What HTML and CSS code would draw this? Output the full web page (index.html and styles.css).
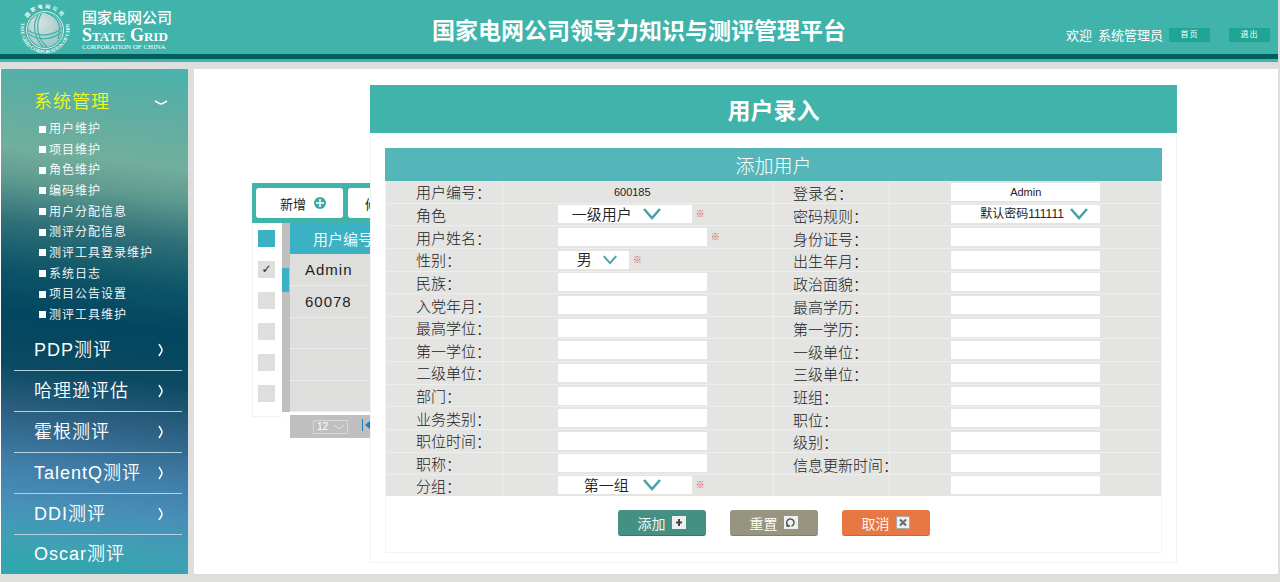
FILE: index.html
```
<!DOCTYPE html>
<html lang="zh-CN">
<head>
    <meta charset="UTF-8">
    <meta name="viewport" content="width=device-width, initial-scale=1.0">
    <title>国家电网公司领导力知识与测评管理平台</title>
    <link rel="stylesheet" href="styles.css">
</head>
<body>
    <header class="header">
        <div class="logo">
            <svg class="logo-mark" viewBox="0 0 50 50" width="50" height="50" aria-hidden="true">
                <defs>
                    <radialGradient id="ball" cx="35%" cy="30%" r="80%">
                        <stop offset="0" stop-color="#d5e2e2"/>
                        <stop offset="1" stop-color="#9cc4c4"/>
                    </radialGradient>
                    <path id="arcTop" d="M6 16 A20.500 20.500 0 0 1 44 16"/>
                    <path id="arcBottom" d="M1.500 17 A24.500 24.500 0 1 0 48.500 17"/>
                </defs>
                <circle cx="25" cy="25" r="18.500" fill="none" stroke="#d8efed" stroke-width="1"/>
                <circle cx="25" cy="25" r="17" fill="url(#ball)"/>
                <g fill="none" stroke="#40b3aa" stroke-width="1.300">
                    <path d="M18 10 C12 20 14 32 23 42"/>
                    <path d="M21 9 C15 20 17 33 27 42"/>
                    <path d="M8 25 C17 32 32 32 42 23"/>
                    <path d="M9 29 C18 36 33 35 41 27"/>
                    <path d="M26 8 C38 11 42 20 38 34"/>
                </g>
                <g fill="#f2fbfa">
                    <text class="logo-ring"><textPath href="#arcTop" startOffset="50%">国家电网公司</textPath></text>
                    <text class="logo-ring logo-ring-en"><textPath href="#arcBottom" startOffset="50%">STATE GRID CORPORATION OF CHINA</textPath></text>
                </g>
            </svg>
            <div class="logo-text">
                <span class="logo-cn">国家电网公司</span>
                <span class="logo-en">State Grid</span>
                <span class="logo-sub">CORPORATION OF CHINA</span>
            </div>
        </div>
        <h1>国家电网公司领导力知识与测评管理平台</h1>
        <div class="user">
            <span>欢迎</span>
            <span>系统管理员</span>
            <a href="#">首页</a>
            <a href="#" class="exit">退出</a>
        </div>
    </header>

    <div class="layout">
        <nav class="sidebar">
            <a href="#" class="menu-open">系统管理
                <svg width="14" height="6" viewBox="0 0 14 6" fill="none" stroke="#fff" stroke-width="1.500"><path d="M1 1 C3 2 5 4 7 4 S11 2 13 1"/></svg>
            </a>
            <ul class="submenu">
                <li><a href="#">用户维护</a></li>
                <li><a href="#">项目维护</a></li>
                <li><a href="#">角色维护</a></li>
                <li><a href="#">编码维护</a></li>
                <li><a href="#">用户分配信息</a></li>
                <li><a href="#">测评分配信息</a></li>
                <li><a href="#">测评工具登录维护</a></li>
                <li><a href="#">系统日志</a></li>
                <li><a href="#">项目公告设置</a></li>
                <li><a href="#">测评工具维护</a></li>
            </ul>
            <ul class="menu">
                <li><a href="#">PDP测评<svg width="6" height="14" viewBox="0 0 6 14"><path d="M1 1 C2 3 4 5 4 7 S2 11 1 13"/></svg></a></li>
                <li><a href="#">哈理逊评估<svg width="6" height="14" viewBox="0 0 6 14"><path d="M1 1 C2 3 4 5 4 7 S2 11 1 13"/></svg></a></li>
                <li><a href="#">霍根测评<svg width="6" height="14" viewBox="0 0 6 14"><path d="M1 1 C2 3 4 5 4 7 S2 11 1 13"/></svg></a></li>
                <li><a href="#">TalentQ测评<svg width="6" height="14" viewBox="0 0 6 14"><path d="M1 1 C2 3 4 5 4 7 S2 11 1 13"/></svg></a></li>
                <li><a href="#">DDI测评<svg width="6" height="14" viewBox="0 0 6 14"><path d="M1 1 C2 3 4 5 4 7 S2 11 1 13"/></svg></a></li>
                <li><a href="#">Oscar测评</a></li>
            </ul>
        </nav>

        <main class="main">
            <!-- 用户列表 -->
            <section class="list">
                <div class="toolbar">
                    <button type="button" class="tool">新增
                        <svg width="12" height="12" viewBox="0 0 12 12"><circle cx="6" cy="6" r="6" fill="#40a9a2"/><path d="M6 2v8M2 6h8" stroke="#fff" stroke-width="1.500"/></svg>
                    </button>
                    <button type="button" class="tool edit">修改</button>
                </div>
                <div class="list-body">
                    <div class="checks">
                        <input type="checkbox" class="all" aria-label="全选">
                        <input type="checkbox" aria-label="Admin" checked>
                        <input type="checkbox" aria-label="60078">
                        <input type="checkbox" aria-label="第三行">
                        <input type="checkbox" aria-label="第四行">
                        <input type="checkbox" aria-label="第五行">
                    </div>
                    <div class="scroll"><div class="thumb"></div></div>
                    <div class="records">
                        <table>
                            <thead><tr><th>用户编号</th></tr></thead>
                            <tbody>
                                <tr><td>Admin</td></tr>
                                <tr><td>60078</td></tr>
                                <tr><td></td></tr>
                                <tr><td></td></tr>
                                <tr><td></td></tr>
                            </tbody>
                        </table>
                        <div class="pager">
                            <span class="pick size">
                                <select aria-label="每页条数"><option>12</option></select>
                                <svg width="12" height="6" viewBox="0 0 12 6"><path d="M1 1l5 4 5-4"/></svg>
                            </span>
                            <button type="button" class="first" aria-label="首页">
                                <svg width="12" height="12" viewBox="0 0 12 12" fill="#1c7fc0"><path d="M0 0h1v12H0zM9 1v10L3 6z"/></svg>
                            </button>
                        </div>
                    </div>
                </div>
            </section>

            <!-- 用户录入弹窗 -->
            <section class="dialog">
                <h2>用户录入</h2>
                <form class="box">
                    <h3>添加用户</h3>
                    <table class="fields">
                        <tr>
                            <th>用户编号：</th>
                            <td><output class="code">600185</output></td>
                            <th><label for="login">登录名：</label></th>
                            <td><input id="login" type="text" value="Admin"></td>
                        </tr>
                        <tr>
                            <th><label for="role">角色</label></th>
                            <td><div class="cell"><span class="pick role"><select id="role"><option>一级用户</option></select><svg width="18" height="12" viewBox="0 0 18 12"><path d="M1 1l8 9 8-9"/></svg></span><i>※</i></div></td>
                            <th><label for="rule">密码规则：</label></th>
                            <td><div class="cell"><span class="pick rule"><select id="rule"><option>默认密码111111</option></select><svg width="18" height="12" viewBox="0 0 18 12"><path d="M1 1l8 9 8-9"/></svg></span></div></td>
                        </tr>
                        <tr>
                            <th><label for="name">用户姓名：</label></th>
                            <td><div class="cell"><input id="name" type="text"><i>※</i></div></td>
                            <th><label for="idcard">身份证号：</label></th>
                            <td><input id="idcard" type="text"></td>
                        </tr>
                        <tr>
                            <th><label for="sex">性别：</label></th>
                            <td><div class="cell"><span class="pick sex"><select id="sex"><option>男</option></select><svg width="14" height="10" viewBox="0 0 18 12"><path d="M1 1l8 9 8-9"/></svg></span><i>※</i></div></td>
                            <th><label for="birth">出生年月：</label></th>
                            <td><input id="birth" type="text"></td>
                        </tr>
                        <tr>
                            <th><label for="nation">民族：</label></th>
                            <td><input id="nation" type="text"></td>
                            <th><label for="politics">政治面貌：</label></th>
                            <td><input id="politics" type="text"></td>
                        </tr>
                        <tr>
                            <th><label for="party">入党年月：</label></th>
                            <td><input id="party" type="text"></td>
                            <th><label for="topedu">最高学历：</label></th>
                            <td><input id="topedu" type="text"></td>
                        </tr>
                        <tr>
                            <th><label for="topdeg">最高学位：</label></th>
                            <td><input id="topdeg" type="text"></td>
                            <th><label for="firstedu">第一学历：</label></th>
                            <td><input id="firstedu" type="text"></td>
                        </tr>
                        <tr>
                            <th><label for="firstdeg">第一学位：</label></th>
                            <td><input id="firstdeg" type="text"></td>
                            <th><label for="unit1">一级单位：</label></th>
                            <td><input id="unit1" type="text"></td>
                        </tr>
                        <tr>
                            <th><label for="unit2">二级单位：</label></th>
                            <td><input id="unit2" type="text"></td>
                            <th><label for="unit3">三级单位：</label></th>
                            <td><input id="unit3" type="text"></td>
                        </tr>
                        <tr>
                            <th><label for="dept">部门：</label></th>
                            <td><input id="dept" type="text"></td>
                            <th><label for="team">班组：</label></th>
                            <td><input id="team" type="text"></td>
                        </tr>
                        <tr>
                            <th><label for="biz">业务类别：</label></th>
                            <td><input id="biz" type="text"></td>
                            <th><label for="post">职位：</label></th>
                            <td><input id="post" type="text"></td>
                        </tr>
                        <tr>
                            <th><label for="posttime">职位时间：</label></th>
                            <td><input id="posttime" type="text"></td>
                            <th><label for="level">级别：</label></th>
                            <td><input id="level" type="text"></td>
                        </tr>
                        <tr>
                            <th><label for="jobtitle">职称：</label></th>
                            <td><input id="jobtitle" type="text"></td>
                            <th><label for="update">信息更新时间：</label></th>
                            <td><input id="update" type="text"></td>
                        </tr>
                        <tr>
                            <th><label for="group">分组：</label></th>
                            <td><div class="cell"><span class="pick role group"><select id="group"><option>第一组</option></select><svg width="18" height="12" viewBox="0 0 18 12"><path d="M1 1l8 9 8-9"/></svg></span><i>※</i></div></td>
                            <th></th>
                            <td><input type="text" aria-label="备注"></td>
                        </tr>
                    </table>
                    <div class="actions">
                        <button type="submit" class="btn add">添加
                            <svg width="14" height="13" viewBox="0 0 14 13"><path d="M0 0h14v13H0z" fill="#eef0ee"/><path d="M7 3v7M4 6.500h6" stroke="#444" stroke-width="2"/></svg>
                        </button>
                        <button type="reset" class="btn reset">重置
                            <svg width="14" height="13" viewBox="0 0 14 13"><path d="M0 0h14v13H0z" fill="#eef0ee"/><path d="M4 9.500A3.700 3.700 0 1 1 7.500 10.200M3 7v3h3" fill="none" stroke="#444" stroke-width="1.300"/></svg>
                        </button>
                        <button type="button" class="btn cancel">取消
                            <svg width="14" height="13" viewBox="0 0 14 13"><path d="M.5.5h13v12H.5z" fill="#eef0ee" stroke="#aaa"/><path d="M4 3.500l6 6M10 3.500l-6 6" stroke="#667" stroke-width="2"/></svg>
                        </button>
                    </div>
                </form>
            </section>
        </main>
    </div>
</body>
</html>
```
FILE: styles.css
```
* {box-sizing: border-box; margin: 0; padding: 0;}
body {
    display: flex; flex-direction: column;
    min-height: 100vh; padding: 0 2px 8px 0;
    background: #dededd; color: #222;
    font-family: "Liberation Sans", "Noto Sans CJK SC", sans-serif;
    font-size: 15px;
}
ul {list-style: none;}
a {color: inherit; text-decoration: none;}
button, input, select {font-family: inherit; border: 0; border-radius: 0; background: none; color: inherit;}
select {appearance: none;}

/* 头部 */
.header {
    display: grid; grid-template-columns: 1fr auto 1fr;
    height: 62px; padding: 0 8px;
    background: linear-gradient(#40b3aa 54px, #005f5c 54px, #005f5c 59px, #40b3aa 59px);
    color: #fff;
}
.header h1 {padding-top: 14px; font-size: 23px; line-height: 34px; font-weight: bold;}
.logo {display: flex; gap: 12px; padding: 5px 0 0 12px;}
.logo-mark {overflow: visible;}
.logo-ring {font-size: 5px; font-weight: bold; text-anchor: middle; letter-spacing: 2px;}
.logo-ring-en {font-family: "Liberation Serif", serif; letter-spacing: 0;}
.logo-text {display: flex; flex-direction: column; padding-top: 4px; white-space: nowrap;}
.logo-cn {font-size: 15px; line-height: 18px; font-weight: 500;}
.logo-en {font: bold 18px/16px "Liberation Serif", serif; font-variant: small-caps;}
.logo-sub {font: 7px/8px "Liberation Serif", serif;}
.user {
    display: flex; justify-content: flex-end; align-items: center; gap: 6px;
    height: 54px; padding-top: 15px;
    font-size: 13px; white-space: nowrap;
}
.user a {
    width: 41px; background: #1da596;
    font-size: 8px; line-height: 14px; letter-spacing: 1px; text-align: center;
}
.user .exit {margin-left: 13px;}

.layout {display: flex; flex: 1; gap: 6px; margin-top: 7px;}

/* 左侧菜单 */
.sidebar {
    width: 188px; border-left: 1px solid #fff;
    background: linear-gradient(187deg, #4ab3ae 0%, #5caea4 8%, #72ae9c 19%, #5f9a90 25%, #2f7078 33%, #0d5468 42%, #034660 50%, #0b4a62 60%, #2d6082 69%, #417fab 79%, #4790b8 86%, #3fa0b4 93%, #30a6ae 98%);
    color: #fff;
}
.menu-open {
    display: flex; align-items: center; justify-content: space-between;
    padding: 17px 20px 0 33px;
    color: #f0fa1e; font-size: 18px; line-height: 33px; letter-spacing: 1px; font-weight: 350;
}
.submenu {
    display: flex; flex-direction: column; justify-content: space-between;
    height: 211px; padding: 0 0 5px 38px;
}
.submenu li {
    display: flex; align-items: center; gap: 3px;
    font-size: 12px; line-height: 20px; letter-spacing: 1px; font-weight: 350;
}
.submenu li::before {content: ""; width: 7px; height: 7px; background: #fff;}
.menu {padding: 0 6px 0 13px;}
.menu li {border-bottom: 1px solid #b4d3df;}
.menu li:last-child {border-bottom: 0;}
.menu a {
    display: flex; align-items: center; justify-content: space-between;
    padding: 0 18px 0 20px;
    font-size: 18px; line-height: 40px; letter-spacing: 1px; font-weight: 350;
}
.menu li:last-child a {line-height: 39px;}
.menu svg {fill: none; stroke: #fff; stroke-width: 1.500;}

.main {position: relative; flex: 1; background: #fff;}

/* 用户列表 */
.list {padding: 114px 220px 0 58px;}
.toolbar {display: flex; gap: 5px; height: 40px; padding: 5px 4px; background: #40b3aa;}
.tool {
    display: flex; align-items: center; gap: 8px;
    width: 87px; height: 30px; padding-left: 24px;
    background: #fff; border-radius: 3px; font-size: 13px;
}
.tool.edit {padding-left: 17px;}
.list-body {display: flex; align-items: flex-start;}
.checks {
    display: flex; flex-direction: column; gap: 14px;
    width: 30px; height: 194px; padding: 7px 0 0 5px;
    border: solid #f3f3f3; border-width: 0 0 1px 1px;
}
.checks input {
    display: grid; place-items: center;
    appearance: none; width: 17px; height: 17px; background: #dededd;
}
.checks .all {background: #3bb1c4;}
.checks input:checked::before {content: "✓"; font-family: "DejaVu Sans", sans-serif; font-size: 12px; line-height: 17px;}
.scroll {width: 8px; height: 189px; padding-top: 45px; background: #bfbfbf;}
.thumb {width: 7px; height: 24px; background: #3bb1c4;}
.records {flex: 1;}
.records table {width: 100%; height: 189px; border-collapse: collapse;}
.records th {
    height: 31px; padding-left: 23px;
    background: #3bb1c4; color: #fff;
    font-size: 15px; font-weight: 350; text-align: left;
}
.records td {
    height: 31px; padding-left: 15px;
    background: #dededd; border-bottom: 1px solid #ebebeb;
    font-size: 15px; letter-spacing: 1px;
}
.pager {display: flex; align-items: center; gap: 14px; height: 23px; margin-top: 3px; padding-left: 23px; background: #bfbfbf;}

/* 下拉框，箭头叠在右侧 */
.pick {display: inline-grid; align-items: center; background: #fff;}
.pick select, .pick svg {grid-area: 1 / 1;}
.pick select {width: 100%; height: 18px;}
.pick svg {justify-self: end; pointer-events: none; fill: none; stroke: #45a3a5; stroke-width: 2.500;}
.size {width: 35px; background: none; border: 1px solid #d8d8d8; color: #fff;}
.size select {height: 12px; padding-left: 3px; font-size: 10px;}
.size svg {margin-right: 2px; stroke: #e4e4e4; stroke-width: 1;}

/* 弹窗 */
.dialog {
    position: absolute; top: 16px; left: 176px; right: 101px;
    background: #fff; border: 1px solid #f3f3f3; border-top: 0;
}
.dialog h2 {
    margin: 0 -1px; padding-top: 4px; background: #40b3aa; color: #fff;
    font-size: 23px; line-height: 44px; text-align: center;
}
.box {margin: 15px 14px 9px; border: 1px solid #f3f3f3; border-top: 0;}
.box h3 {
    margin: 0 -1px; padding-top: 4px; background: #55b6b9; color: #fff;
    font-size: 19px; line-height: 29px; font-weight: 300; text-align: center;
}
.fields {
    width: 100%; height: 315px; table-layout: fixed; border-collapse: collapse;
    background: #e4e4e2;
}
.fields th, .fields td {border: solid #eeeeec; border-width: 0 0 1px 1px; text-align: left;}
.fields tr:last-child > * {border-bottom-color: #e4e4e2;}
.fields th {width: 15%; padding: 2px 0 0 30px; font-size: 15px; line-height: 17px; font-weight: 300; white-space: nowrap;}
.fields label {display: block;}
.fields th:first-child {border-left: 0;}
.fields th:nth-child(3) {padding: 4px 0 0 19px;}
.fields td {width: 35%; padding-left: 55px; font-size: 11px;}
.fields td:last-child {padding-left: 61px;}
.cell {display: flex; align-items: center; gap: 4px;}
.cell i {color: #d8504a; font-size: 9px; line-height: 12px; font-style: normal;}
.fields input, .code {
    display: block; width: 149px; height: 18px; background: #fff;
    font-size: 11px; line-height: 18px; text-align: center; color: #222;
}
.code {background: none;}
.role {width: 134px;}
.role select {padding-left: 14px; font-size: 15px; font-weight: 350;}
.role svg {margin-right: 31px;}
.group select {padding-left: 26px;}
.sex {width: 71px;}
.sex select {padding-left: 19px; font-size: 15px; font-weight: 350;}
.sex svg {margin-right: 12px;}
.rule {width: 149px;}
.rule select {padding-left: 29px; font-size: 12px;}
.rule svg {margin-right: 12px;}

.actions {display: flex; justify-content: center; gap: 24px; padding: 14px 0 16px;}
.btn {
    display: flex; align-items: center; justify-content: center; gap: 6px;
    width: 88px; height: 26px; border-radius: 3px; color: #fff;
    font-size: 14px; font-weight: 350;
}
.add {background: #449183; border-bottom: 1px solid #2f7a6c;}
.reset {background: #97957f; border-bottom: 1px solid #828069;}
.cancel {background: #e87843; border-bottom: 1px solid #d4642f;}
```
